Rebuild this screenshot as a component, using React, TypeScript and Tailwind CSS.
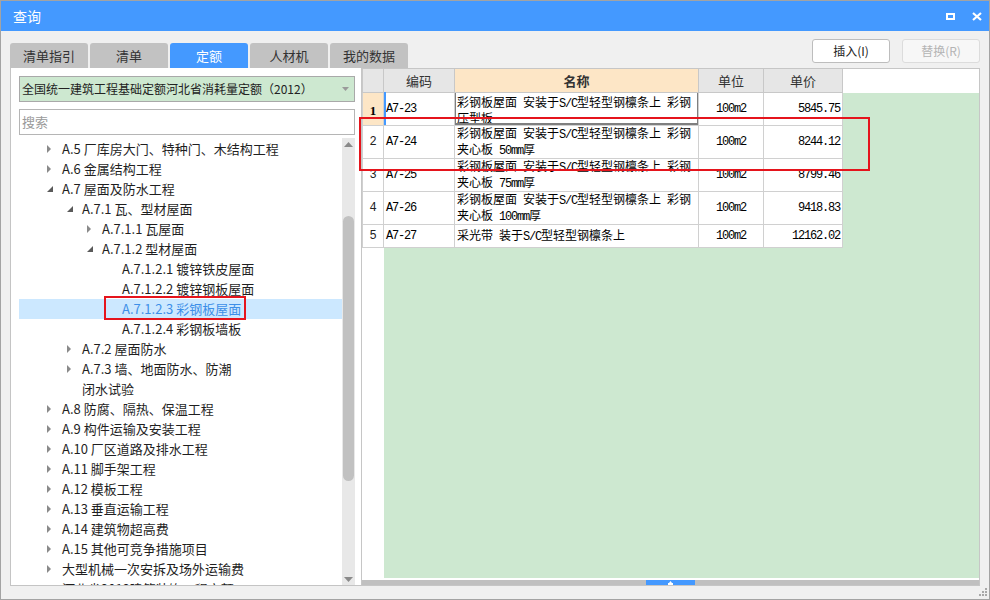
import React from "react";

type TreeItem = { lvl: number; arrow: "r" | "d" | null; text: string; second?: string; selected?: boolean };

const tree: TreeItem[] = [
  { lvl: 0, arrow: "r", text: "A.5 厂库房大门、特种门、木结构工程" },
  { lvl: 0, arrow: "r", text: "A.6 金属结构工程" },
  { lvl: 0, arrow: "d", text: "A.7 屋面及防水工程" },
  { lvl: 1, arrow: "d", text: "A.7.1 瓦、型材屋面" },
  { lvl: 2, arrow: "r", text: "A.7.1.1 瓦屋面" },
  { lvl: 2, arrow: "d", text: "A.7.1.2 型材屋面" },
  { lvl: 3, arrow: null, text: "A.7.1.2.1 镀锌铁皮屋面" },
  { lvl: 3, arrow: null, text: "A.7.1.2.2 镀锌钢板屋面" },
  { lvl: 3, arrow: null, text: "A.7.1.2.3 彩钢板屋面", selected: true },
  { lvl: 3, arrow: null, text: "A.7.1.2.4 彩钢板墙板" },
  { lvl: 1, arrow: "r", text: "A.7.2 屋面防水" },
  { lvl: 1, arrow: "r", text: "A.7.3 墙、地面防水、防潮", second: "闭水试验" },
  { lvl: 0, arrow: "r", text: "A.8 防腐、隔热、保温工程" },
  { lvl: 0, arrow: "r", text: "A.9 构件运输及安装工程" },
  { lvl: 0, arrow: "r", text: "A.10 厂区道路及排水工程" },
  { lvl: 0, arrow: "r", text: "A.11 脚手架工程" },
  { lvl: 0, arrow: "r", text: "A.12 模板工程" },
  { lvl: 0, arrow: "r", text: "A.13 垂直运输工程" },
  { lvl: 0, arrow: "r", text: "A.14 建筑物超高费" },
  { lvl: 0, arrow: "r", text: "A.15 其他可竞争措施项目" },
  { lvl: 0, arrow: "r", text: "大型机械一次安拆及场外运输费" },
  { lvl: 0, arrow: null, text: "河北省2012建筑装饰工程定额" },
];

type Row = { n: string; code: string; name: string[]; unit: string; price: string; tall: boolean };

const rows: Row[] = [
  { n: "1", code: "A7-23", name: ["彩钢板屋面 安装于S/C型轻型钢檩条上 彩钢", "压型板"], unit: "100m2", price: "5845.75", tall: true },
  { n: "2", code: "A7-24", name: ["彩钢板屋面 安装于S/C型轻型钢檩条上 彩钢", "夹心板 50mm厚"], unit: "100m2", price: "8244.12", tall: true },
  { n: "3", code: "A7-25", name: ["彩钢板屋面 安装于S/C型轻型钢檩条上 彩钢", "夹心板 75mm厚"], unit: "100m2", price: "8799.46", tall: true },
  { n: "4", code: "A7-26", name: ["彩钢板屋面 安装于S/C型轻型钢檩条上 彩钢", "夹心板 100mm厚"], unit: "100m2", price: "9418.83", tall: true },
  { n: "5", code: "A7-27", name: ["采光带 装于S/C型轻型钢檩条上"], unit: "100m2", price: "12162.02", tall: false },
];

function Mixed({ s }: { s: string }) {
  const parts = s.split(/([\x20-\x7E]+)/).filter((p) => p.length > 0);
  return (
    <>
      {parts.map((p, i) =>
        /^[\x20-\x7E]+$/.test(p) ? (
          <span key={i} className="font-['Liberation_Mono',monospace] tracking-[-1.2px] whitespace-pre">
            {p}
          </span>
        ) : (
          <span key={i}>{p}</span>
        )
      )}
    </>
  );
}

function ArrowRight() {
  return (
    <svg width="5" height="8" viewBox="0 0 5 8">
      <polygon points="0,0 4,4 0,8" fill="#8a8a8a" />
    </svg>
  );
}

function ArrowDown() {
  return (
    <svg width="6" height="6" viewBox="0 0 6 6">
      <polygon points="6,0 6,6 0,6" fill="#5a5a5a" />
    </svg>
  );
}

const tabs = ["清单指引", "清单", "定额", "人材机", "我的数据"];

export default function App() {
  return (
    <div className="relative w-[990px] h-[600px] border border-[#a3a3a3] bg-[#f0f0f0] flex flex-col overflow-hidden font-['Noto_Sans_CJK_SC',sans-serif] text-[#222]">
      {/* Title bar */}
      <div className="h-[30px] shrink-0 bg-[#4499ff] flex items-center pl-[12px] pr-[7px]">
        <span className="text-white text-[14px] leading-none">查询</span>
        <div className="ml-auto flex items-center gap-[17px]">
          <svg width="9" height="7" viewBox="0 0 9 7">
            <rect x="1" y="1" width="7" height="5" fill="none" stroke="#fff" strokeWidth="2" />
          </svg>
          <svg width="10" height="9" viewBox="0 0 10 9">
            <path d="M1 1 L9 8 M9 1 L1 8" stroke="#fff" strokeWidth="2.2" />
          </svg>
        </div>
      </div>

      {/* Tabs row */}
      <div className="h-[37px] shrink-0 flex pl-[9px] pr-[9px]">
        <div className="flex items-end gap-[2px]">
          {tabs.map((t) => (
            <div
              key={t}
              className={
                t === "定额"
                  ? "w-[78px] h-[25px] rounded-t-[3px] bg-[#4499ff] text-white text-[13px] flex items-center justify-center"
                  : "w-[78px] h-[25px] rounded-t-[3px] bg-[#c2c2c2] text-[#333] text-[13px] flex items-center justify-center"
              }
            >
              {t}
            </div>
          ))}
        </div>
        <div className="ml-auto self-start mt-[8px] flex gap-[12px]">
          <div className="w-[78px] h-[24px] rounded-[3px] border border-[#bdbdbd] bg-white text-[12px] text-[#222] flex items-center justify-center">
            插入(I)
          </div>
          <div className="w-[78px] h-[24px] rounded-[3px] border border-[#dcdcdc] bg-[#f7f7f7] text-[12px] text-[#b4b4b4] flex items-center justify-center">
            替换(R)
          </div>
        </div>
      </div>

      {/* Content */}
      <div className="h-[518px] shrink-0 flex pl-[9px]">
        {/* Left panel */}
        <div className="w-[351px] shrink-0 border-l border-b border-[#c4c4c4] bg-white pl-[8px] pr-[6px] pt-[8px] flex flex-col">
          <div className="h-[26px] shrink-0 border border-[#a9a9a9] bg-[#cde8d0] flex items-center pl-[2px] pr-[5px] text-[12px] text-[#222]">
            <span>全国统一建筑工程基础定额河北省消耗量定额（2012）</span>
            <svg className="ml-auto" width="7" height="4" viewBox="0 0 7 4">
              <polygon points="0,0 7,0 3.5,4" fill="#9a9a9a" />
            </svg>
          </div>
          <div className="mt-[7px] h-[26px] shrink-0 border border-[#b5b5b5] bg-white flex items-center pl-[2px] text-[13px] text-[#9a9a9a]">
            搜索
          </div>
          <div className="mt-[3px] flex-1 min-h-0 flex overflow-hidden">
            <div className="flex-1 pt-[1px] overflow-hidden">
              {tree.map((it, i) => (
                <div key={i}>
                  <div
                    className={
                      it.selected
                        ? "h-[20px] flex items-center bg-[#cce8ff] text-[#3d8fe8] text-[13px] whitespace-nowrap"
                        : "h-[20px] flex items-center text-[#1f1f1f] text-[13px] whitespace-nowrap"
                    }
                  >
                    <div className="shrink-0" style={{ width: 28 + it.lvl * 20 }} />
                    <div className="w-[15px] shrink-0 flex items-center">
                      {it.arrow === "r" && <ArrowRight />}
                      {it.arrow === "d" && <ArrowDown />}
                    </div>
                    <span>{it.text}</span>
                  </div>
                  {it.second && (
                    <div className="h-[20px] flex items-center text-[#1f1f1f] text-[13px] whitespace-nowrap">
                      <div className="shrink-0" style={{ width: 43 + it.lvl * 20 }} />
                      <span>{it.second}</span>
                    </div>
                  )}
                </div>
              ))}
            </div>
            <div className="relative w-[13px] shrink-0 bg-[#e8e8e8] flex flex-col items-center">
              <svg className="mt-[4px]" width="9" height="5" viewBox="0 0 9 5">
                <polygon points="0,5 4.5,0 9,5" fill="#8a8a8a" />
              </svg>
              <div className="absolute top-[78px] left-[1px] right-[1px] h-[265px] rounded-full bg-[#c1c1c1]" />
              <svg className="absolute bottom-[3px]" width="9" height="5" viewBox="0 0 9 5">
                <polygon points="0,0 9,0 4.5,5" fill="#8a8a8a" />
              </svg>
            </div>
          </div>
        </div>

        {/* Right panel */}
        <div className="w-[619px] shrink-0 border border-[#c6c6c6] bg-white flex flex-col">
          {/* Header */}
          <div className="h-[24px] shrink-0 flex text-[13px] text-[#333]">
            <div className="w-[22px] h-[24px] border-l border-r border-b border-[#c8c8c8] bg-[#e6e6e6]" />
            <div className="w-[71px] h-[24px] border-r border-b border-[#c8c8c8] bg-[#e6e6e6] flex items-center justify-center">编码</div>
            <div className="w-[244px] h-[24px] border-r border-b border-[#c8c8c8] bg-[#fde6c6] flex items-center justify-center font-bold">名称</div>
            <div className="w-[65px] h-[24px] border-r border-b border-[#c8c8c8] bg-[#e6e6e6] flex items-center justify-center">单位</div>
            <div className="w-[79px] h-[24px] border-r border-b border-[#c8c8c8] bg-[#e6e6e6] flex items-center justify-center">单价</div>
          </div>

          {/* Body */}
          <div className="flex-1 min-h-0 flex">
            <div className="w-[22px] shrink-0 bg-white flex flex-col">
              {rows.map((r) => (
                <div
                  key={r.n}
                  className={
                    (r.tall ? "h-[33px] " : "h-[23px] ") +
                    (r.n === "1"
                      ? "border-l border-r border-b border-[#d0d0d0] bg-[#fde6c6] flex items-center justify-center pt-[3px] font-['Liberation_Serif',serif] font-bold text-[13px] text-black"
                      : "border-l border-r border-b border-[#d0d0d0] bg-white flex items-center justify-center font-['Liberation_Mono',monospace] text-[12px] text-[#222]")
                  }
                >
                  {r.n}
                </div>
              ))}
            </div>
            <div className="flex-1 bg-[#cde8d0] flex flex-col">
              {rows.map((r) => (
                <div key={r.n} className={(r.tall ? "h-[33px] " : "h-[23px] ") + "flex shrink-0 text-[12px] text-black"}>
                  <div className="relative w-[71px] h-full border-r border-b border-[#d0d0d0] bg-white flex items-center pl-[2px]">
                    {r.n === "1" && <div className="absolute left-0 top-[-1px] bottom-0 w-[2px] bg-[#4499ff]" />}
                    <Mixed s={r.code} />
                  </div>
                  <div className="relative w-[244px] h-full border-r border-b border-[#d0d0d0] bg-white flex flex-col justify-center pl-[2px] leading-[13px] overflow-hidden">
                    {r.name.map((l, i) => (
                      <div key={i} className="whitespace-nowrap">
                        <Mixed s={l} />
                      </div>
                    ))}
                    {r.n === "1" && (
                      <div className="absolute left-[-1px] top-[-1px] right-[-1px] bottom-[0px] border-2 border-t border-[#7f7f7f] border-t-[#4499ff]" />
                    )}
                  </div>
                  <div className="w-[65px] h-full border-r border-b border-[#d0d0d0] bg-white flex items-center justify-center">
                    <Mixed s={r.unit} />
                  </div>
                  <div className="w-[79px] h-full border-r border-b border-[#d0d0d0] bg-white flex items-center justify-end pr-[2px]">
                    <Mixed s={r.price} />
                  </div>
                </div>
              ))}
            </div>
          </div>

          {/* Horizontal scrollbar */}
          <div className="mt-[2px] h-[5px] shrink-0 bg-[#c0c0c0] flex justify-center">
            <div className="w-[49px] h-full bg-[#4499ff] flex items-center justify-center">
              <svg width="7" height="4" viewBox="0 0 7 4">
                <polygon points="2,2 3.5,0 5,2" fill="#fff" />
                <rect x="1" y="2" width="5" height="2" fill="#fff" />
              </svg>
            </div>
          </div>
        </div>
      </div>

      {/* Bottom strip */}
      <div className="flex-1 flex justify-end items-end pr-[1px] pb-[2px]">
        <svg width="9" height="9" viewBox="0 0 9 9">
          <rect x="6" y="0" width="2" height="2" fill="#a8a8a8" />
          <rect x="3" y="3" width="2" height="2" fill="#a8a8a8" />
          <rect x="6" y="3" width="2" height="2" fill="#a8a8a8" />
          <rect x="0" y="6" width="2" height="2" fill="#a8a8a8" />
          <rect x="3" y="6" width="2" height="2" fill="#a8a8a8" />
          <rect x="6" y="6" width="2" height="2" fill="#a8a8a8" />
        </svg>
      </div>

      {/* Red annotation boxes */}
      <div className="absolute left-[103px] top-[295px] w-[142px] h-[24px] border-2 border-[#e5141c]" />
      <div className="absolute left-[358px] top-[116px] w-[511px] h-[54px] border-2 border-[#e5141c]" />
    </div>
  );
}
